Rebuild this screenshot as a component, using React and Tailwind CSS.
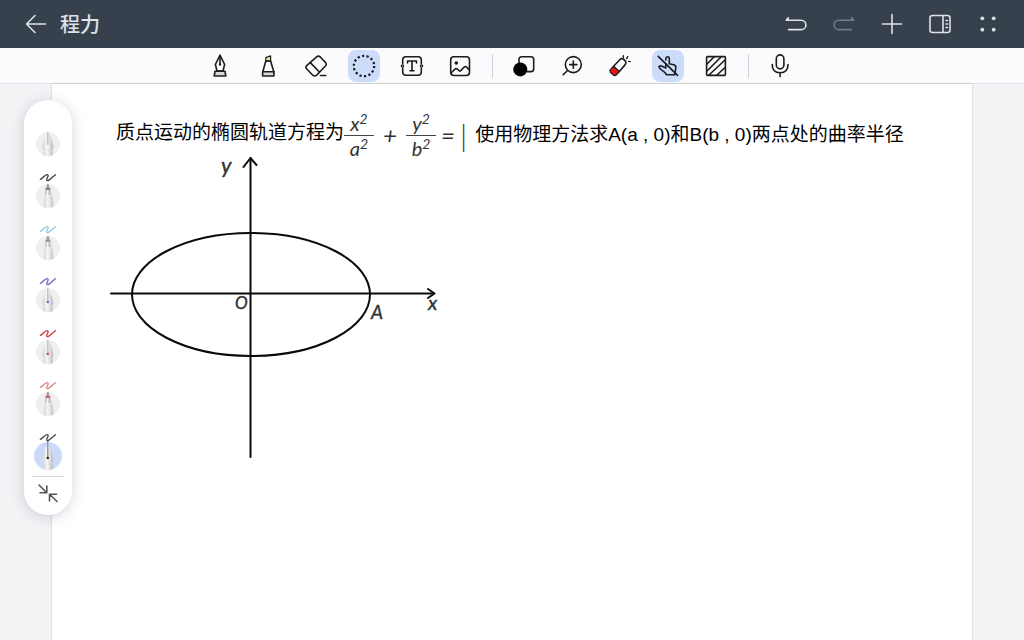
import React, { useState } from 'react';
import clsx from 'clsx';

const Icon = ({ children, className }) => (
    <svg
        viewBox="0 0 24 24"
        className={clsx('w-6 h-6', className)}
        fill="none"
        stroke="currentColor"
        strokeWidth="1.6"
        strokeLinecap="round"
        strokeLinejoin="round"
        aria-hidden="true"
    >
        {children}
    </svg>
);

const HEADER_ACTIONS = [
    {
        id: 'undo',
        label: '撤销',
        icon: <path d="M4.2 5.8L2.2 8.2H17.2A4.7 4.7 0 0 1 17.2 17.6H4.5M4.2 5.8V8" />,
    },
    {
        id: 'redo',
        label: '重做',
        disabled: true,
        icon: <path d="M19.8 5.8L21.8 8.2H6.8A4.7 4.7 0 0 0 6.8 17.6H19.5M19.8 5.8V8" />,
    },
    { id: 'add', label: '添加', icon: <path d="M12 2.5V21.5M2.5 12H21.5" /> },
    {
        id: 'panel',
        label: '侧栏',
        icon: (
            <>
                <rect x="2" y="3.5" width="20" height="17" rx="2.5" />
                <path d="M15 3.5V20.5M18 8.5H19.5M18 12H19.5M18 15.5H19.5" />
            </>
        ),
    },
    {
        id: 'more',
        label: '更多',
        icon: (
            <g fill="currentColor" stroke="none">
                <circle cx="6.3" cy="6.3" r="1.9" />
                <circle cx="17.7" cy="6.3" r="1.9" />
                <circle cx="6.3" cy="17.7" r="1.9" />
                <circle cx="17.7" cy="17.7" r="1.9" />
            </g>
        ),
    },
];

const TOOLS = [
    {
        id: 'pen',
        label: '钢笔',
        icon: (
            <>
                <path d="M12 1.2L7.4 10.5L9 17H15L16.6 10.5Z" />
                <path d="M12 2V10" />
                <circle cx="12" cy="10.5" r="1.2" fill="currentColor" stroke="none" />
                <path d="M7 17.2H17L17.8 22H6.2Z" fill="#d9d9dc" />
            </>
        ),
    },
    {
        id: 'marker',
        label: '荧光笔',
        icon: (
            <>
                <path d="M9.8 7V3.6L14.6 1.8V7Z" fill="#f4e48a" strokeWidth="1.2" />
                <path d="M9.8 7H14.6L17.8 17.8H6.8Z" />
                <path d="M6.6 17.8H17.9V22H6.6Z" fill="#d9d9dc" />
            </>
        ),
    },
    {
        id: 'eraser',
        label: '橡皮',
        icon: (
            <>
                <path d="M2.7 11.6L12.6 2.8Q14.6 1.4 16.5 3.2L21.5 8.4Q23 10.2 21.4 12L12.6 21.2Q10.6 22.8 8.8 21.2L2.8 15Q1.2 13.2 2.7 11.6Z" />
                <path d="M6.3 8.6L15.4 18M16.5 21.5H21.8" />
            </>
        ),
    },
    {
        id: 'lasso',
        label: '套索',
        icon: <circle cx="12" cy="12" r="10.2" strokeWidth="2.2" strokeLinecap="butt" strokeDasharray="2.2 2.378" />,
    },
    {
        id: 'text',
        label: '文本',
        icon: (
            <>
                <path d="M2.7 9.8V6Q2.7 2.7 6 2.7H18Q21.3 2.7 21.3 6V9.8M2.7 14.2V18Q2.7 21.3 6 21.3H18Q21.3 21.3 21.3 18V14.2" />
                <circle cx="2.5" cy="12" r="1.2" strokeWidth="1.2" />
                <circle cx="21.5" cy="12" r="1.2" strokeWidth="1.2" />
                <path d="M7.5 9V7H16.5V9M12 7V16.8M10 16.8H14" />
            </>
        ),
    },
    {
        id: 'image',
        label: '图片',
        icon: (
            <>
                <rect x="2.7" y="2.7" width="18.8" height="18.8" rx="3.2" />
                <circle cx="8.3" cy="9" r="1.8" fill="currentColor" stroke="none" />
                <path d="M3 19L7 15.2Q8.3 14 9.6 15.2L11.2 16.8Q12.2 17.5 13 16.4L16 13.2Q17.3 12 18.6 13.2L21.3 15.8" />
            </>
        ),
    },
    { id: 'divider-1' },
    {
        id: 'shape',
        label: '图形',
        icon: (
            <>
                <path d="M7 8.5V5.5Q7 2.8 9.8 2.8H19Q21.7 2.8 21.7 5.5V14.8Q21.7 17.6 19 17.6H15" />
                <circle cx="8.3" cy="15.4" r="7" fill="#000" stroke="none" />
            </>
        ),
    },
    {
        id: 'zoom',
        label: '缩放',
        icon: (
            <>
                <circle cx="13.3" cy="10.6" r="8" />
                <path d="M7.5 16.5L3.2 20.8M13.3 7V14.2M9.7 10.6H16.9" />
            </>
        ),
    },
    {
        id: 'laser',
        label: '激光笔',
        icon: (
            <>
                <path d="M5.6 12.2L12.2 5.2Q14 4 15.8 5.4L17.6 7.4Q18.6 9 17.2 10.6L11.4 17.4" />
                <path d="M5.6 12.2L11.4 17.6L8.4 20.8Q6.8 22.2 5.2 20.8L2.4 18.2Q1.2 16.8 2.6 15.4Z" fill="#f01010" strokeWidth="1.3" />
                <path d="M15.4 1.8V3.4M19.8 2.6L18.6 4.6M20.6 7.4L22.2 7.6" strokeWidth="1.4" />
            </>
        ),
    },
    {
        id: 'touch',
        label: '手指触控',
        icon: (
            <>
                <path d="M9.8 6V4.6Q9.9 2.8 11.6 2.8Q13.3 2.8 13.3 4.6V9.8L17.6 10.8Q20.2 11.4 19.8 14L18.8 20.8H10.6Q8.8 18 6.2 16.4Q3 14.2 2.9 12.8Q4 11.2 6 12.2L9.8 14V10" />
                <path d="M2.2 2.4L21.6 21.4" />
            </>
        ),
    },
    {
        id: 'hatch',
        label: '遮挡',
        icon: (
            <>
                <rect x="2.6" y="2.6" width="18.8" height="18.8" rx="1" />
                <path d="M3 10L10 3M3 17L17 3M5 21L21 6M13 21L21 13.5" />
            </>
        ),
    },
    { id: 'divider-2' },
    {
        id: 'mic',
        label: '录音',
        icon: (
            <>
                <rect x="8.3" y="0.9" width="7.6" height="14" rx="3.8" />
                <path d="M4.2 10.5Q4.2 18.8 12.1 18.8Q20 18.8 20 10.5M12.1 18.8V22.6" />
            </>
        ),
    },
];

const PENS = [
    { id: 1, type: 'nib', dot: '#ffffff' },
    { id: 2, type: 'ball', ink: '#3c3c3c', band: '#777777' },
    { id: 3, type: 'ball', ink: '#93c8e6', band: '#8a94b8' },
    { id: 4, type: 'nib', ink: '#6f62c0', dot: '#6f62c0' },
    { id: 5, type: 'nib', ink: '#cf3a3a', dot: '#d83a3a' },
    { id: 6, type: 'ball', ink: '#dd8282', band: '#e05252' },
    { id: 7, type: 'nib', ink: '#444444', dot: '#222222', long: true },
];

const PenPreview = ({ pen, active }) => (
    <svg viewBox="0 0 48 52" className="w-12 h-13" fill="none" aria-hidden="true">
        <defs>
            <linearGradient id={`body-${pen.id}`} x1="0" x2="1">
                <stop offset="0" stopColor="#d2d2d2" />
                <stop offset="0.4" stopColor="#f6f6f6" />
                <stop offset="0.7" stopColor="#dcdcdc" />
                <stop offset="1" stopColor="#b9b9b9" />
            </linearGradient>
            <clipPath id={`clip-${pen.id}`}>
                <path d={active ? 'M10 0H38V34A14 14 0 0 1 10 34Z' : 'M12 0H36V34A12 12 0 0 1 12 34Z'} />
            </clipPath>
        </defs>
        <circle cx="24" cy="34" r={active ? 14 : 12} fill={active ? '#ccdafa' : '#efefef'} />
        {pen.ink && (
            <path
                d="M16.3 17.4C18.8 16.6 20.8 12.2 23.4 12.6C26 13.4 20.8 18.2 23.4 18.6C25.8 18.8 28 14.8 31.6 12.8"
                stroke={pen.ink}
                strokeWidth="1.3"
                strokeLinecap="round"
            />
        )}
        {pen.type === 'nib' ? (
            <g clipPath={`url(#clip-${pen.id})`}>
                <path d="M23.8 21.5C22 26 18.6 30 18.4 37L20 43H28L29.4 37C29 30 25.6 26 23.8 21.5Z" fill={`url(#body-${pen.id})`} />
                <path d="M19.4 42H28.6V50H19.4Z" fill={`url(#body-${pen.id})`} />
                <path d={pen.long ? 'M23.8 18V35' : 'M23.8 22V35'} stroke={pen.long ? '#555' : '#a2a2a2'} strokeWidth="0.8" />
                <circle cx="23.8" cy="36" r="1.2" fill={pen.dot} />
            </g>
        ) : (
            <g clipPath={`url(#clip-${pen.id})`}>
                <path d="M21.6 28L20.2 36L19.4 50H30L28.6 36L26.4 28Z" fill={`url(#body-${pen.id})`} />
                <path d="M21.6 27.5H26.2L27.2 33H20.8Z" fill="#c4c4c4" />
                <path d="M22.8 27.5H24.4V33H22.4Z" fill="#f4f4f4" />
                <path d="M21.6 27.8L23.2 22H24.6L26.2 27.8Z" fill="#a0a0a0" />
                <path d="M21.4 27H26.4" stroke={pen.band} strokeWidth="1.6" />
            </g>
        )}
    </svg>
);

const Fraction = ({ top, bottom }) => (
    <span className="flex flex-col items-center w-[30px] leading-6">
        <span>{top}<sup className="text-sm leading-none">2</sup></span>
        <span className="w-full h-px bg-[#444]" />
        <span>{bottom}<sup className="text-sm leading-none">2</sup></span>
    </span>
);

const EllipseGraph = () => (
    <svg
        viewBox="108 150 336 310"
        className="ml-14 -mt-3 w-84 h-[310px] font-['Lato',sans-serif] italic"
        fill="none"
        stroke="#0a0a0a"
        strokeWidth="2"
        strokeLinecap="round"
        strokeLinejoin="round"
    >
        <ellipse cx="251" cy="294.5" rx="119" ry="61.5" />
        <path d="M111 293.5H434M250.5 457V158" />
        <path d="M243.5 167L250.5 158L256.5 165M428 289L434.5 293.5L428 298" />
        <g fill="#333" stroke="#333" strokeWidth="0.4">
            <text x="221" y="173" fontSize="22">y</text>
            <text x="235" y="309" fontSize="17">O</text>
            <text x="371" y="319" fontSize="19">A</text>
            <text x="428" y="310" fontSize="20">x</text>
        </g>
    </svg>
);

const App = () => {
    const [tool, setTool] = useState('lasso');
    const [touchOff, setTouchOff] = useState(true);
    const [pen, setPen] = useState(7);

    const handleTool = (id) => {
        if (id === 'touch') {
            setTouchOff(!touchOff);
        } else {
            setTool(id);
        }
    };

    const isActive = (id) => (id === 'touch' ? touchOff : tool === id);

    return (
        <div className="min-h-screen flex flex-col bg-[#f2f3f5] font-['Liberation_Sans','Noto_Sans_CJK_SC',sans-serif]">
            <header className="h-12 px-5 flex items-center justify-between bg-[#37414e] text-[#dde2e7]">
                <div className="flex items-center gap-2">
                    <button type="button" aria-label="返回" className="w-8 h-8 flex items-center justify-center">
                        <Icon>
                            <path d="M21.5 12H2.5M11 3.5L2.5 12L11 20.5" />
                        </Icon>
                    </button>
                    <h1 className="text-xl leading-8 font-medium font-['Noto_Sans_CJK_SC',sans-serif]">程力</h1>
                </div>
                <div className="flex items-center gap-4">
                    {HEADER_ACTIONS.map((action) => (
                        <button
                            key={action.id}
                            type="button"
                            aria-label={action.label}
                            disabled={action.disabled}
                            className="w-8 h-8 flex items-center justify-center disabled:text-[#727b86]"
                        >
                            <Icon>{action.icon}</Icon>
                        </button>
                    ))}
                </div>
            </header>

            <nav className="h-9 pr-6 flex items-center justify-center gap-4 bg-[#fbfbfd] border-b border-[#e2e3e6] text-[#1c1c1e]">
                {TOOLS.map((item) =>
                    item.icon ? (
                        <button
                            key={item.id}
                            type="button"
                            aria-label={item.label}
                            aria-pressed={isActive(item.id)}
                            onClick={() => handleTool(item.id)}
                            className={clsx(
                                'w-8 h-8 flex items-center justify-center rounded-lg',
                                isActive(item.id) && 'bg-[#ccdcfb]'
                            )}
                        >
                            <Icon>{item.icon}</Icon>
                        </button>
                    ) : (
                        <span key={item.id} className="w-px h-6 -mr-px bg-[#cfd0d4]" />
                    )
                )}
            </nav>

            <main className="relative flex-1 flex">
                <section className="flex-1 mx-13 pt-6 bg-white shadow-[0_0_2px_rgba(0,0,0,0.25)]">
                    <div className="h-[54px] pl-16 flex items-center text-[19px] leading-7 text-black whitespace-nowrap">
                        <span className="pb-1">质点运动的椭圆轨道方程为</span>
                        <span className="flex items-center text-xl font-['Lato',sans-serif] italic text-[#333]">
                            <Fraction top="x" bottom="a" />
                            <span className="w-8 text-center text-2xl">+</span>
                            <Fraction top="y" bottom="b" />
                            <span className="w-6 text-center text-2xl">=</span>
                            <span className="text-3xl font-light not-italic">|</span>
                        </span>
                        <span className="pl-2">使用物理方法求A(a , 0)和B(b , 0)两点处的曲率半径</span>
                    </div>
                    <EllipseGraph />
                </section>

                <aside className="absolute left-6 top-4 w-12 pt-2.5 flex flex-col items-center rounded-full bg-white shadow-[0_2px_14px_rgba(40,50,80,0.2)]">
                    {PENS.map((item) => (
                        <button
                            key={item.id}
                            type="button"
                            aria-label={`笔 ${item.id}`}
                            aria-pressed={pen === item.id}
                            onClick={() => setPen(item.id)}
                        >
                            <PenPreview pen={item} active={pen === item.id} />
                        </button>
                    ))}
                    <span className="w-8 h-px mt-0.5 bg-[#d8d8da]" />
                    <button type="button" aria-label="收起" className="w-12 h-[38px] flex justify-center pt-1 text-[#555]">
                        <Icon>
                            <path d="M3 4L10.5 11.5M10.8 5V11.8H4M21 20.5L13.8 13.5M13.5 20V13.2H20.5" />
                        </Icon>
                    </button>
                </aside>
            </main>
        </div>
    );
};

export default App;
